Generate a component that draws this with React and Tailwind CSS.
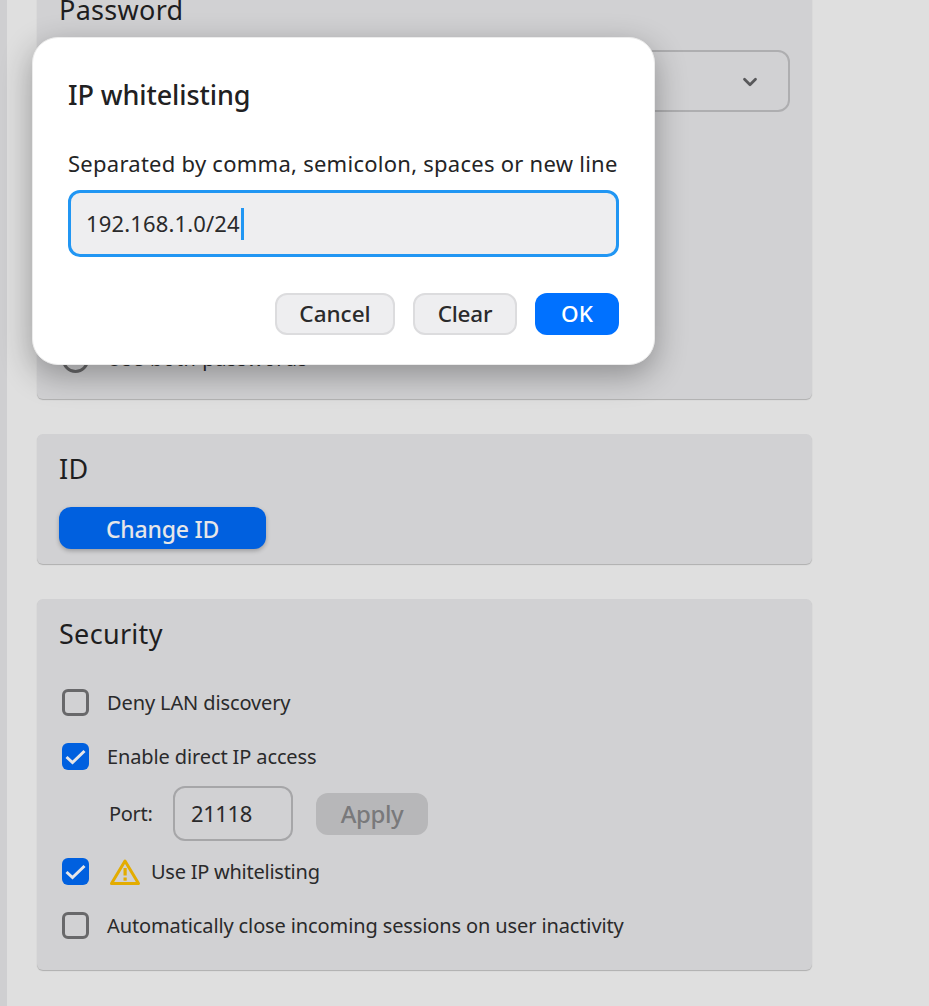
import React from "react";
import { ChevronDown } from "lucide-react";

const font = { fontFamily: '"Noto Sans", "Open Sans", sans-serif' };

function CheckBox({ checked }) {
  if (checked) {
    return (
      <div className="w-[27px] h-[27px] rounded-[6px] bg-[#0060df] flex items-center justify-center shrink-0">
        <svg width="21" height="16" viewBox="0 0 21 16" fill="none">
          <path d="M1.5 8 L7.5 13.5 L19.5 2" stroke="#e6e6e8" strokeWidth="3" />
        </svg>
      </div>
    );
  }
  return <div className="w-[27px] h-[27px] rounded-[6px] border-[3px] border-[#68686a] shrink-0" />;
}

function Row({ checked, children }) {
  return (
    <div className="flex items-center h-[27px] pl-[25px] gap-[18px] text-[20px] tracking-[-0.12px] text-[#2a2a2b]">
      <CheckBox checked={checked} />
      {children}
    </div>
  );
}

function Card({ title, className, children }) {
  return (
    <section className={`bg-[#d1d1d3] rounded-[6px] shadow-[0_1px_1px_rgba(0,0,0,0.22)] px-[22px] ${className}`}>
      <h2 className="text-[27px] leading-[38px] tracking-[0.3px] text-[#1e1e1f]">{title}</h2>
      {children}
    </section>
  );
}

function Dialog() {
  return (
    <div className="absolute left-[32px] top-[37px] w-[623px] h-[328px] bg-white rounded-[26px] border border-[#ececec] shadow-[0_10px_32px_rgba(0,0,0,0.32)] px-[35px] pt-[38px]">
      <h1 className="text-[27px] leading-[38px] font-medium tracking-[-0.1px] text-[#212122]">IP whitelisting</h1>
      <p className="mt-[34px] text-[22px] leading-[30px] tracking-[0.26px] whitespace-nowrap text-[#242425]">Separated by comma, semicolon, spaces or new line</p>
      <div className="mt-[12px] h-[67px] w-[551px] rounded-[12px] border-[3px] border-[#2196f3] bg-[#eeeef0] flex items-center pl-[15px] text-[22px] tracking-[0.15px] text-[#2a2a2b]">
        192.168.1.0/24
        <span className="w-[3px] h-[32px] bg-[#2196f3] ml-[1px]" />
      </div>
      <div className="mt-[36px] flex justify-end gap-[18px] w-[551px]">
        <button className="w-[120px] h-[42px] rounded-[12px] border-2 border-[#dcdcde] bg-[#eeeef0] text-[22.5px] font-medium text-[#2a2a2b]">Cancel</button>
        <button className="w-[104px] h-[42px] rounded-[12px] border-2 border-[#dcdcde] bg-[#eeeef0] text-[22.5px] font-medium tracking-[-0.2px] text-[#2a2a2b]">Clear</button>
        <button className="w-[84px] h-[42px] rounded-[12px] bg-[#0071ff] text-[22.5px] font-medium text-white">OK</button>
      </div>
    </div>
  );
}

export default function App() {
  return (
    <div className="relative h-[1006px] w-[929px] overflow-hidden bg-[#dfdfdf]" style={font}>
      <div className="flex h-full">
        <div className="w-[7px] bg-[#cfcfd1] shrink-0" />
        <div className="flex-1 pl-[30px] pr-[117px] -mt-[18px] flex flex-col">
          {/* page is scrolled, top of this card is cut off */}
          <Card title="Password" className="h-[417px] pt-[9px] relative">
            <div className="mt-[21px] h-[62px] rounded-[12px] border-2 border-[#aeaeb0] flex items-center justify-end pr-[27px]">
              <ChevronDown size={22} strokeWidth={3} className="mt-[2px] text-[#58585a]" />
            </div>
            <div className="mt-[232px] flex items-center gap-[18px] pl-[3px] text-[20px] tracking-[0.6px] text-[#2a2a2b]">
              <div className="w-[27px] h-[27px] rounded-full border-[3px] border-[#68686a]" />
              Use both passwords
            </div>
          </Card>

          <Card title="ID" className="mt-[35px] h-[130px] pt-[16px]">
            <button className="mt-[19px] w-[207px] h-[42px] rounded-[12px] bg-[#0060df] shadow-[0_2px_4px_rgba(0,0,0,0.25)] text-[23px] leading-[44px] font-medium tracking-[-0.2px] text-[#e6e6e8]">Change ID</button>
          </Card>

          <Card title="Security" className="mt-[35px] h-[371px] pt-[16px]">
            <div className="-mx-[22px] mt-[36px] flex flex-col">
              <Row>Deny LAN discovery</Row>
              <div className="mt-[27px]">
                <Row checked>Enable direct IP access</Row>
              </div>
              <div className="mt-[16px] flex items-center pl-[72px] text-[20px] tracking-[-0.3px] text-[#2a2a2b]">
                <span className="w-[64px]">Port:</span>
                <div className="w-[120px] h-[55px] rounded-[12px] border-2 border-[#a6a6a8] flex items-center pl-[16px] text-[22px] tracking-[-0.4px]">21118</div>
                <button className="ml-[23px] mt-[1px] w-[112px] h-[42px] rounded-[12px] bg-[#b7b7b9] text-[24px] font-medium tracking-[-0.4px] text-[#79797b]">Apply</button>
              </div>
              <div className="mt-[17px]">
                <Row checked>
                  <span className="flex items-center gap-[10px] ml-[2px] tracking-[-0.25px]">
                    <svg width="32" height="28" viewBox="0 0 32 28" fill="none">
                      <path d="M16 3 L29.5 25.5 L2.5 25.5 Z" stroke="#e3ac00" strokeWidth="3" strokeLinejoin="round" />
                      <rect x="14.5" y="10" width="3.2" height="7.5" fill="#e3ac00" />
                      <rect x="14.5" y="19.5" width="3.2" height="3.2" fill="#e3ac00" />
                    </svg>
                    Use IP whitelisting
                  </span>
                </Row>
              </div>
              <div className="mt-[27px]">
                <Row>Automatically close incoming sessions on user inactivity</Row>
              </div>
            </div>
          </Card>
        </div>
      </div>
      <Dialog />
    </div>
  );
}
